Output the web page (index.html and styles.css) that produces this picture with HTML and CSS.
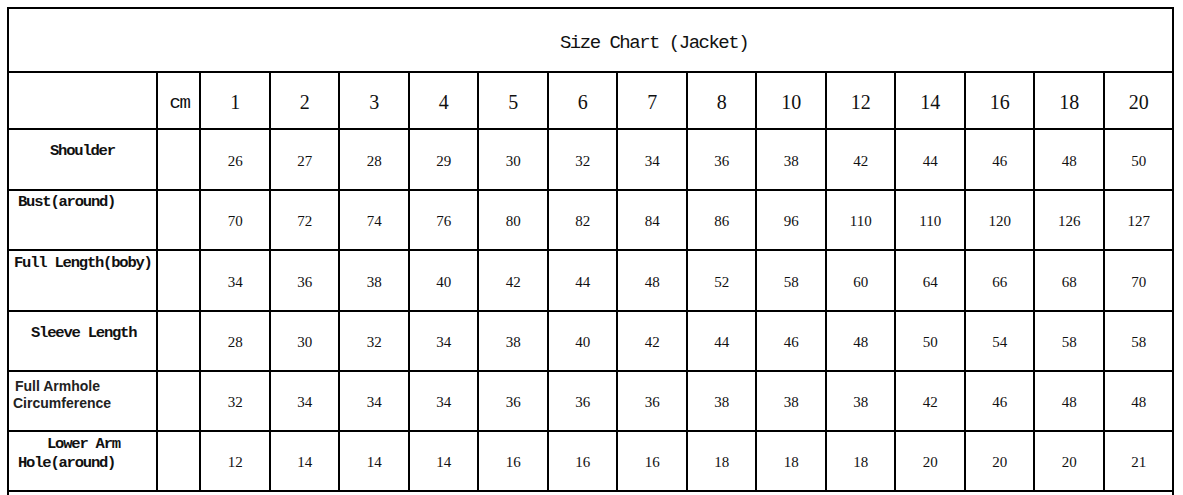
FILE: index.html
```html
<!DOCTYPE html>
<html>
<head>
<meta charset="utf-8">
<link rel="stylesheet" href="styles.css">
</head>
<body>
<div class="chart">
  <div class="title"><span>Size Chart (Jacket)</span></div>

  <div class="cell"></div>
  <div class="cell unit">cm</div>
  <div class="cell head">1</div><div class="cell head">2</div><div class="cell head">3</div><div class="cell head">4</div><div class="cell head">5</div><div class="cell head">6</div><div class="cell head">7</div><div class="cell head">8</div><div class="cell head">10</div><div class="cell head">12</div><div class="cell head">14</div><div class="cell head">16</div><div class="cell head">18</div><div class="cell head">20</div>

  <div class="label mono l-shoulder">Shoulder</div>
  <div class="cell"></div>
  <div class="cell val">26</div><div class="cell val">27</div><div class="cell val">28</div><div class="cell val">29</div><div class="cell val">30</div><div class="cell val">32</div><div class="cell val">34</div><div class="cell val">36</div><div class="cell val">38</div><div class="cell val">42</div><div class="cell val">44</div><div class="cell val">46</div><div class="cell val">48</div><div class="cell val">50</div>

  <div class="label mono l-bust">Bust(around)</div>
  <div class="cell"></div>
  <div class="cell val">70</div><div class="cell val">72</div><div class="cell val">74</div><div class="cell val">76</div><div class="cell val">80</div><div class="cell val">82</div><div class="cell val">84</div><div class="cell val">86</div><div class="cell val">96</div><div class="cell val">110</div><div class="cell val">110</div><div class="cell val">120</div><div class="cell val">126</div><div class="cell val">127</div>

  <div class="label mono l-full">Full Length(boby)</div>
  <div class="cell"></div>
  <div class="cell val">34</div><div class="cell val">36</div><div class="cell val">38</div><div class="cell val">40</div><div class="cell val">42</div><div class="cell val">44</div><div class="cell val">48</div><div class="cell val">52</div><div class="cell val">58</div><div class="cell val">60</div><div class="cell val">64</div><div class="cell val">66</div><div class="cell val">68</div><div class="cell val">70</div>

  <div class="label mono l-sleeve">Sleeve Length</div>
  <div class="cell"></div>
  <div class="cell val">28</div><div class="cell val">30</div><div class="cell val">32</div><div class="cell val">34</div><div class="cell val">38</div><div class="cell val">40</div><div class="cell val">42</div><div class="cell val">44</div><div class="cell val">46</div><div class="cell val">48</div><div class="cell val">50</div><div class="cell val">54</div><div class="cell val">58</div><div class="cell val">58</div>

  <div class="label sans l-arm"><span class="line a1">Full Armhole</span><span class="line a2">Circumference</span></div>
  <div class="cell"></div>
  <div class="cell val">32</div><div class="cell val">34</div><div class="cell val">34</div><div class="cell val">34</div><div class="cell val">36</div><div class="cell val">36</div><div class="cell val">36</div><div class="cell val">38</div><div class="cell val">38</div><div class="cell val">38</div><div class="cell val">42</div><div class="cell val">46</div><div class="cell val">48</div><div class="cell val">48</div>

  <div class="label mono l-lower"><span class="line w1">Lower Arm</span><span class="line w2">Hole(around)</span></div>
  <div class="cell"></div>
  <div class="cell val">12</div><div class="cell val">14</div><div class="cell val">14</div><div class="cell val">14</div><div class="cell val">16</div><div class="cell val">16</div><div class="cell val">16</div><div class="cell val">18</div><div class="cell val">18</div><div class="cell val">18</div><div class="cell val">20</div><div class="cell val">20</div><div class="cell val">20</div><div class="cell val">21</div>

  <div class="foot"></div>
</div>
</body>
</html>
```

FILE: styles.css
```css
html, body {
  margin: 0;
  padding: 0;
  overflow: hidden;
  background: #fff;
}

body {
  padding: 7px 0 0 7px;
}

.chart {
  width: 1167px;
  box-sizing: border-box;
  display: grid;
  grid-template-columns: 147px 41px repeat(14, 1fr);
  grid-template-rows: 62px 55px 59px 58px 59px 58px 58px 58px 40px;
  gap: 2px;
  padding: 2px 2px 0 2px;
  background: #000;
  color: #111;
}

.title,
.foot {
  grid-column: 1 / -1;
  background: #fff;
}

.title {
  display: flex;
  align-items: center;
  justify-content: center;
  padding: 6px 0 0 127px;
  font-family: "Liberation Mono", monospace;
  font-size: 19px;
  letter-spacing: -1.5px;
  color: #111;
}

.cell {
  background: #fff;
  display: flex;
  align-items: center;
  justify-content: center;
}

.unit {
  font-family: "Liberation Mono", monospace;
  font-size: 19px;
  letter-spacing: -1.5px;
  padding-top: 4px;
  padding-left: 2px;
}

.head {
  font-family: "Liberation Serif", serif;
  font-size: 20px;
  padding-top: 4px;
  padding-left: 1px;
}

.val {
  font-family: "Liberation Serif", serif;
  font-size: 15px;
  padding-top: 3px;
  padding-left: 1px;
}

.label {
  background: #fff;
  white-space: nowrap;
  color: #111;
}

.mono {
  font-family: "Liberation Mono", monospace;
  font-size: 15.5px;
  font-weight: bold;
  letter-spacing: -1.2px;
  line-height: 16px;
}

.sans {
  font-family: "Liberation Sans", sans-serif;
  font-size: 14px;
  font-weight: bold;
  line-height: 17px;
  color: #222;
}

.line {
  display: block;
}

.l-shoulder {
  padding: 13px 0 0 41px;
}

.l-bust {
  padding: 3px 0 0 9px;
}

.l-full {
  padding: 4px 0 0 5px;
}

.l-sleeve {
  padding: 13px 0 0 22px;
}

.l-arm {
  padding: 6px 0 0 0;
}

.a1 {
  padding-left: 6px;
}

.a2 {
  padding-left: 4px;
}

.l-lower {
  padding: 3px 0 0 0;
  line-height: 19px;
}

.w1 {
  padding-left: 38px;
}

.w2 {
  padding-left: 9px;
}
```
